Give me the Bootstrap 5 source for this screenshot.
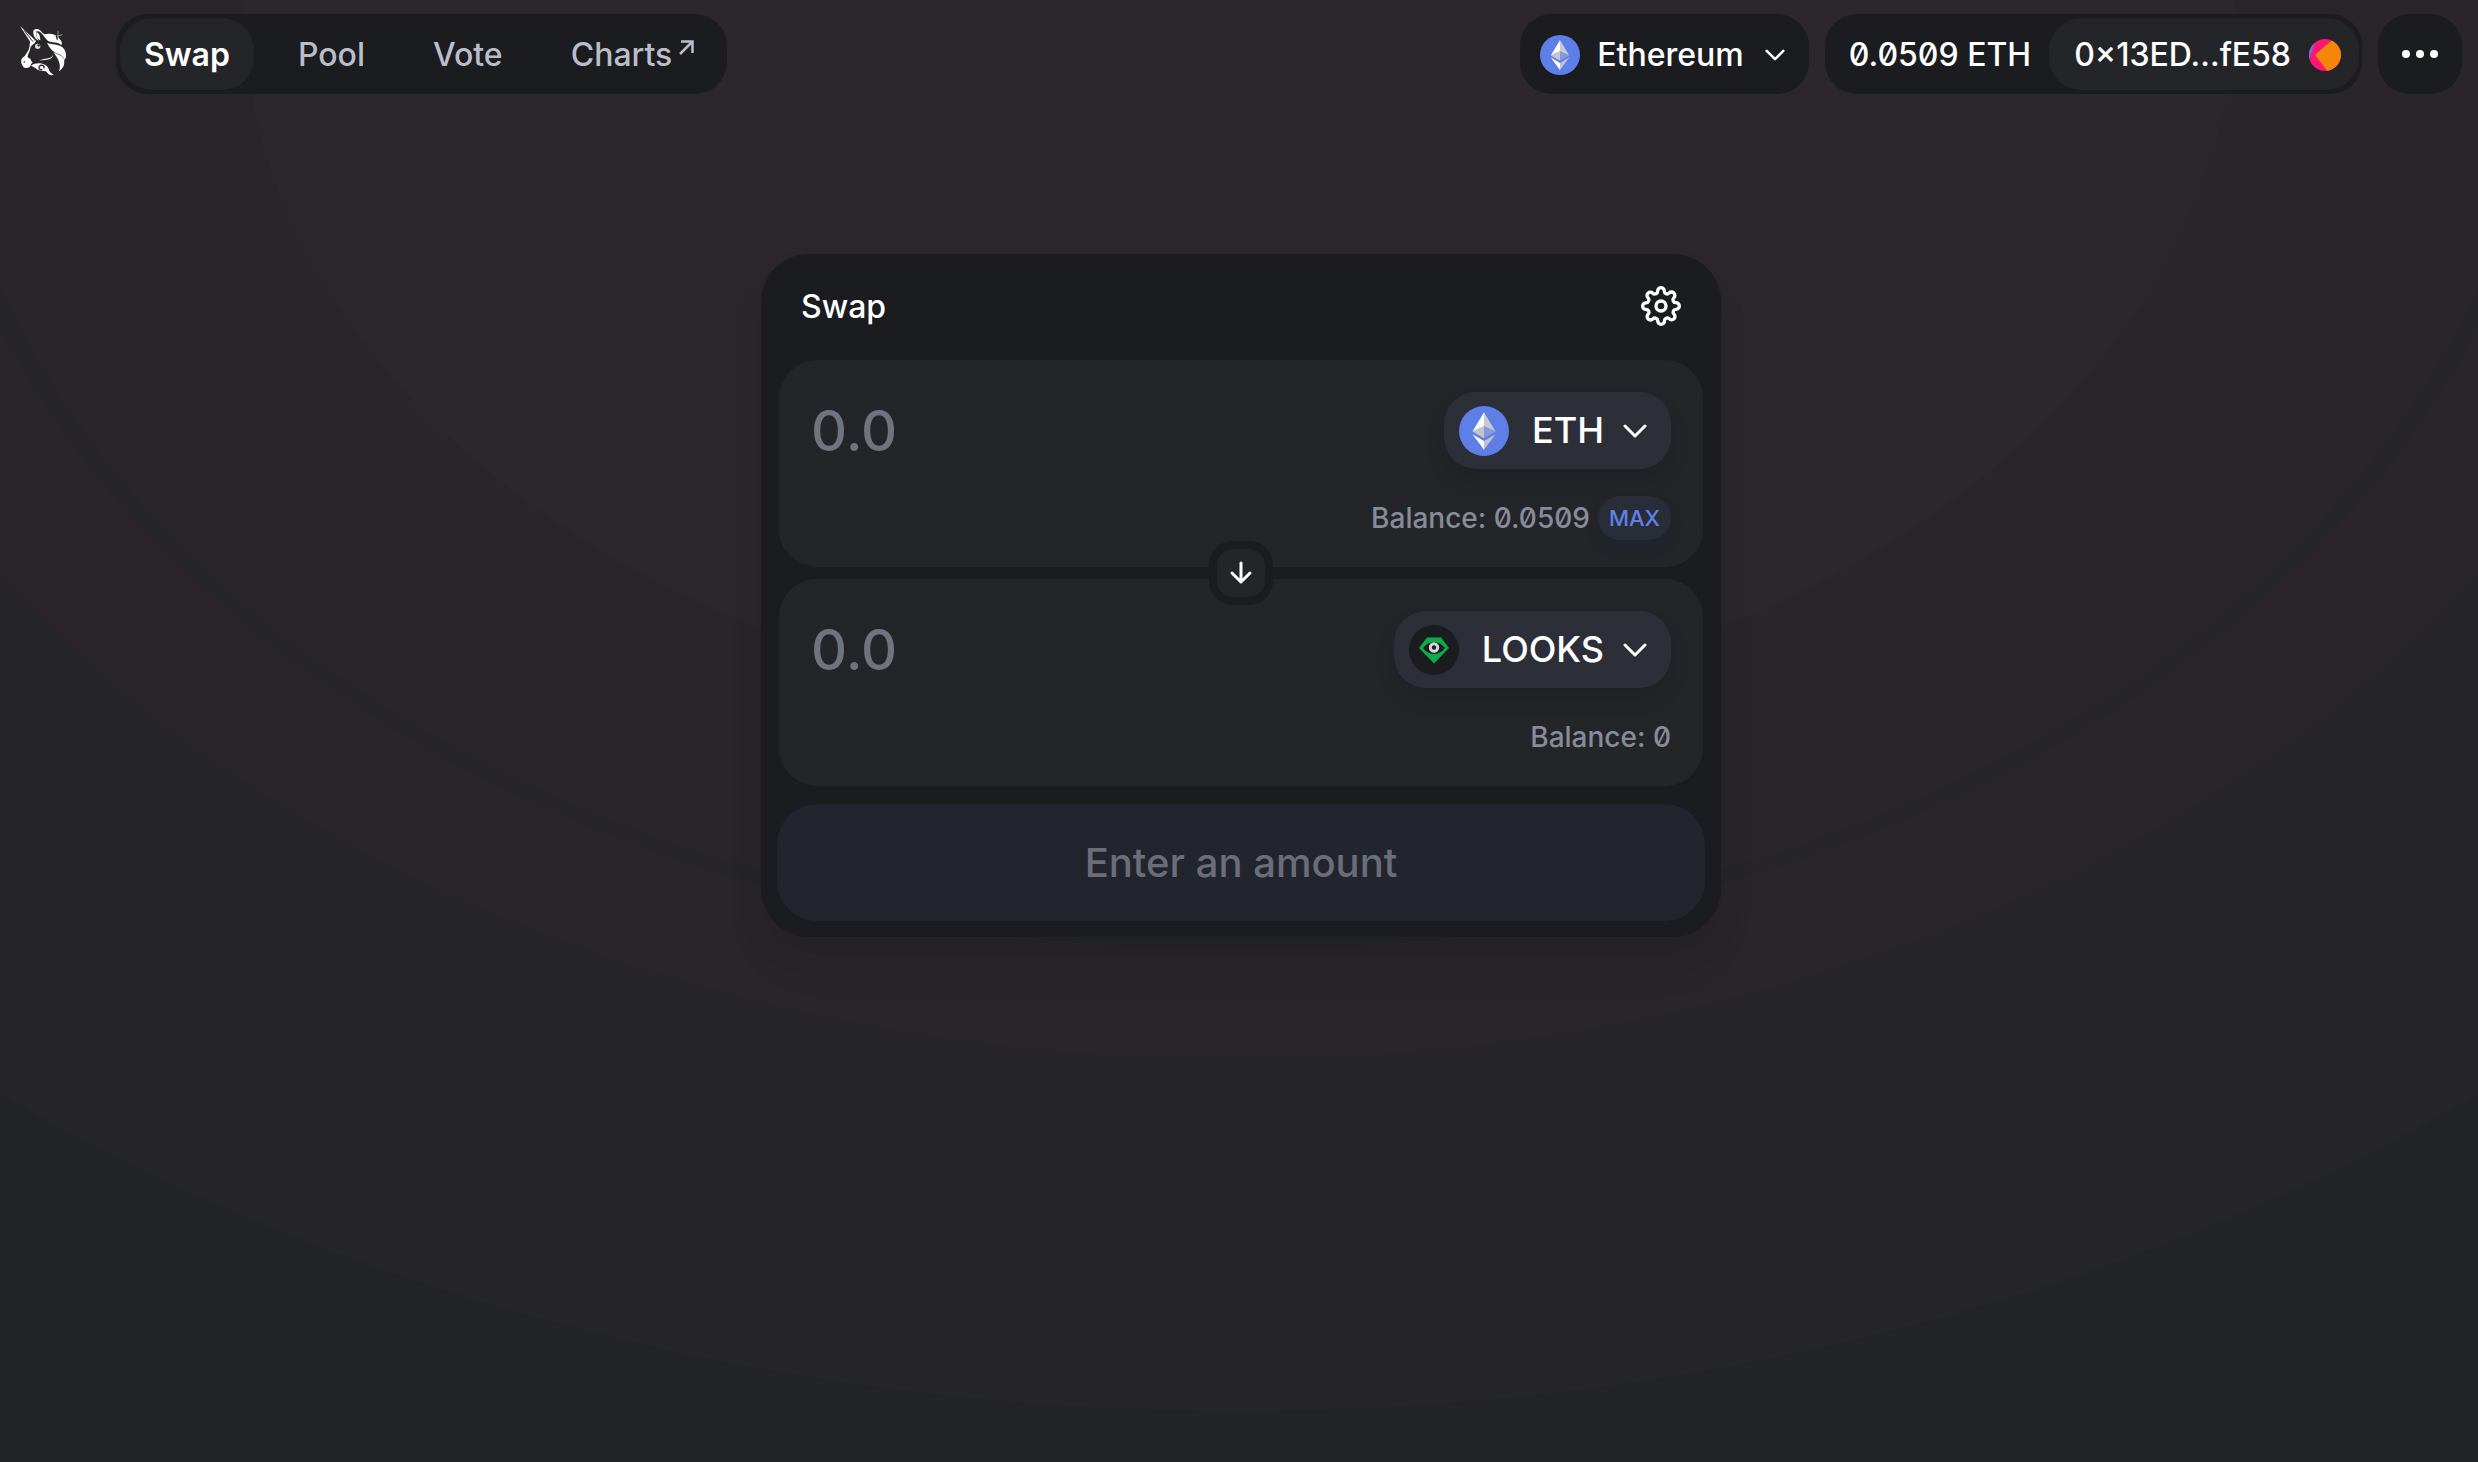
<!DOCTYPE html>
<html lang="en">
<head>
<meta charset="utf-8">
<meta name="viewport" content="width=device-width, initial-scale=1">
<title>Swap</title>
<link rel="stylesheet" href="https://cdn.jsdelivr.net/npm/bootstrap@5.3.0/dist/css/bootstrap.min.css">
<style>
:root { --ink: #1b1c1f; --panel: #232529; --raised: #2c2f38; --muted: #bbbeca; --blue: #5f81e9; }
body {
  font-family: Inter, "Liberation Sans", sans-serif; font-size: 32px; font-weight: 500; line-height: 40px;
  color: #fff; min-height: 100vh;
  background: radial-gradient(82vw 100vh at 50% 0, #2c262d 49%, #29252b 49% 64%, #26252a 64% 65%, #29252b 65% 72.400%, #25252a 72.400% 96.500%, #222428 96.500%) #222428;
}
a, button { color: inherit; text-decoration: none; }
button { border: 0; font: inherit; }
svg { display: block; flex: none; }
.topbar { padding: 14px 16px; }
.pill { height: 80px; border-radius: 32px; background: var(--ink); }
.brand { margin: 0 49px 0 3px; }
.tabs { padding: 4px; gap: 20px; }
.tab { height: 72px; padding: 2px 24px 0; border-radius: 32px; color: var(--muted); display: flex; align-items: center; }
.tab.current { background: var(--panel); color: #fff; font-weight: 600; }
.tab.outside { padding-right: 29px; gap: 7px; }
.net { padding: 2px 24px 0 20px; gap: 17px; }
.wallet { padding-right: 3px; }
.slashed { font-feature-settings: "zero"; }
.funds { padding: 2px 18px 0 24px; }
.account { height: 72px; border-radius: 32px; background: var(--panel); padding: 2px 18px 0 25px; gap: 18px; }
.dots { width: 84px; }
.swapcard { width: 960px; margin: 146px auto 0; padding: 16px; border-radius: 48px; background: var(--ink); box-shadow: 0 32px 48px rgba(0,0,0,.04), 0 16px 32px rgba(0,0,0,.06); }
.swaphead { height: 88px; padding: 16px 24px 0; }
.swaptitle { font-size: 32px; font-weight: 500; line-height: 40px; margin: 1px 0 0; }
.panel { height: 211px; border: 2px solid var(--ink); border-radius: 40px; background: var(--panel); padding: 32px; }
.amount { font-size: 56px; font-weight: 500; line-height: 64px; height: 77px; min-width: 0; border: 0; padding: 0; background: none; color: #fff; outline: 0; }
.amount::placeholder { color: #70747f; opacity: 1; }
.token { height: 77px; border-radius: 32px; padding: 0 24px 0 15px; background: var(--raised); font-size: 36px; box-shadow: 0 12px 20px rgba(0,0,0,.1); }
.tokname { margin: 0 19px 0 23px; padding-bottom: 2px; }
.bal { font-size: 28px; color: #888c99; height: 44px; margin-top: 27px; gap: 8px; }
.maxbtn { height: 44px; padding: 0 11px; border-radius: 24px; background: #292d37; color: var(--blue); font-size: 22px; line-height: 44px; box-shadow: 0 8px 10px rgba(32,36,48,.6); }
.flip { width: 64px; height: 64px; border: 8px solid var(--ink); border-radius: 24px; background: var(--panel); padding: 0; }
.go { height: 117px; border-radius: 40px; background: #23252e; font-size: 40px; }
.go:disabled { color: #6a6e78; }
</style>
</head>
<body>
<svg width="0" height="0" class="position-absolute" aria-hidden="true">
  <symbol id="eth" viewBox="0 0 40 40">
    <circle cx="20" cy="20" r="20" fill="#5f7fe8"/>
    <path d="M20 5v11.200l9.200 4.200z" fill="#c9cbd3"/><path d="M20 5l-9.200 15.400L20 16.200z" fill="#fff"/>
    <path d="M20 16.200v9.600l9.200-5.400z" fill="#8799d9"/><path d="M10.800 20.400l9.200 5.400v-9.600z" fill="#c4c6ce"/>
    <path d="M20 28v7l9.200-12.400z" fill="#c0c3cf"/><path d="M20 35v-7l-9.200-5.400z" fill="#fff"/>
  </symbol>
  <symbol id="chev" viewBox="0 0 24 14"><path d="M2 2l10 10L22 2" fill="none" stroke="#fff" stroke-width="3" stroke-linecap="round" stroke-linejoin="round"/></symbol>
</svg>

<header class="topbar d-flex align-items-center justify-content-between">
  <div class="d-flex align-items-center">
    <a href="#" class="brand" aria-label="Home">
      <svg width="48" height="58" viewBox="27 30 144 174">
        <g fill="#fff">
          <path d="M30 33L74 74l-4 10-9-3z"/>
          <path d="M61 79c-3 8-1 14-4 22-3 9-8 13-11 20-3 5-10 6-12 14-2 9 3 20 10 23 6 2 14 1 17-5 2-5 3-8 7-10-3-4-6-6-6-11-7-3-10-4-9-9 2-8 7-14 8-24 2-7 5-9 11-13 3-2 5-5 6-10z"/>
          <path d="M70 47c5-7 14-6 20-1 5 4 8 10 14 12 9-3 22-2 31 2 9 5 14 11 19 19 2 4 2 8 0 12-6-7-15-8-25-9-8-1-14-2-20-9-4-5-8-12-16-20-5-5-10-5-14-4-3 9 1 18 7 28l-8-5c-7-8-9-16-8-25z"/>
          <path d="M79 52c7 1 12 12 12 24-8-2-13-13-12-24z"/>
          <path d="M111 84c12 4 25 3 38 8 14 6 20 17 19 34l-4 9c-3-10-10-15-20-19-14-5-24-14-33-32z"/>
          <path d="M131 112c12 7 26 9 31 21 3 14-1 27-15 36 4-11 3-22-1-31-3-9-9-15-15-26z"/>
          <path d="M63 152c9-7 22-8 34-6 12 3 18 10 20 19 2 7 8 11 14 14l-6 2c-10-1-12-8-18-12-8-3-13 1-20-3-7-3-12-10-24-14z"/>
        </g>
        <path d="M42 46l27 34" fill="none" stroke="#2a262c" stroke-width="3"/>
        <path d="M130 107c4 17-8 22-24 24-7 1-12 3-18 6 10-2 20-1 29-4 11-4 15-13 13-26z" fill="#fff"/>
        <path d="M102 160c2-9-9-12-14-6-4 6 3 13 9 9" fill="none" stroke="#2a262c" stroke-width="4"/>
        <circle cx="83" cy="94" r="8" fill="#dcdce0"/><circle cx="86" cy="91" r="3.500" fill="#2a262c"/>
        <circle cx="43" cy="141" r="2.500" fill="#2a262c"/>
        <path d="M144 47v32M133 66l24-7" fill="none" stroke="#cfcfd4" stroke-width="2"/><path d="M139 62l3 12" fill="none" stroke="#2a262c" stroke-width="4"/>
      </svg>
    </a>
    <nav class="pill tabs d-flex">
      <a class="tab current" href="#" aria-current="page">Swap</a>
      <a class="tab" href="#">Pool</a>
      <a class="tab" href="#">Vote</a>
      <a class="tab outside" href="#">Charts<svg class="mb-3" width="15" height="15" viewBox="0 0 15 15" aria-hidden="true"><path d="M1 14L13 2M2 1.500h11.500V13" fill="none" stroke="#bbbeca" stroke-width="2.500"/></svg></a>
    </nav>
  </div>
  <div class="d-flex">
    <button class="pill net d-flex align-items-center me-3" type="button">
      <svg width="40" height="40"><use href="#eth"/></svg>Ethereum
      <svg class="ms-1" width="20" height="12"><use href="#chev"/></svg>
    </button>
    <div class="pill wallet d-flex align-items-center me-3">
      <span class="slashed funds">0.0509 ETH</span>
      <button class="account d-flex align-items-center" type="button">0×13ED...fE58
        <svg width="32" height="32" viewBox="0 0 32 32"><clipPath id="av"><circle cx="16" cy="16" r="16"/></clipPath><g clip-path="url(#av)"><path d="M0 0h32v32H0z" fill="#fc1871"/><path d="M0 0h7L1 18l-1 4z" fill="#5f78e8"/><path d="M6 16L22 2l12-4v36H20z" fill="#f68608"/></g></svg>
      </button>
    </div>
    <button class="pill dots d-flex align-items-center justify-content-center p-0" type="button" aria-label="Menu">
      <svg width="38" height="10" viewBox="0 0 38 10"><g fill="#fff"><circle cx="5" cy="5" r="4"/><circle cx="19" cy="5" r="4"/><circle cx="33" cy="5" r="4"/></g></svg>
    </button>
  </div>
</header>

<div class="ps-1">
<main class="swapcard">
  <div class="swaphead d-flex justify-content-between align-items-start">
    <h1 class="swaptitle">Swap</h1>
    <button type="button" class="bg-transparent p-0" aria-label="Settings">
      <svg width="40" height="40" viewBox="0 0 24 24" fill="none" stroke="#fff" stroke-width="2" stroke-linecap="round" stroke-linejoin="round"><circle cx="12" cy="12" r="3"/><path d="M19.400 15a1.650 1.650 0 0 0 .33 1.820l.06.06a2 2 0 0 1 0 2.830 2 2 0 0 1-2.830 0l-.06-.06a1.650 1.650 0 0 0-1.820-.33 1.650 1.650 0 0 0-1 1.510V21a2 2 0 0 1-2 2 2 2 0 0 1-2-2v-.09A1.650 1.650 0 0 0 9 19.400a1.650 1.650 0 0 0-1.820.33l-.06.06a2 2 0 0 1-2.830 0 2 2 0 0 1 0-2.830l.06-.06a1.650 1.650 0 0 0 .33-1.820 1.650 1.650 0 0 0-1.510-1H3a2 2 0 0 1-2-2 2 2 0 0 1 2-2h.09A1.650 1.650 0 0 0 4.600 9a1.650 1.650 0 0 0-.33-1.820l-.06-.06a2 2 0 0 1 0-2.830 2 2 0 0 1 2.830 0l.06.06a1.650 1.650 0 0 0 1.820.33H9a1.650 1.650 0 0 0 1-1.510V3a2 2 0 0 1 2-2 2 2 0 0 1 2 2v.09a1.650 1.650 0 0 0 1 1.510 1.650 1.650 0 0 0 1.820-.33l.06-.06a2 2 0 0 1 2.830 0 2 2 0 0 1 0 2.830l-.06.06a1.650 1.650 0 0 0-.33 1.820V9a1.650 1.650 0 0 0 1.510 1H21a2 2 0 0 1 2 2 2 2 0 0 1-2 2h-.09a1.650 1.650 0 0 0-1.510 1z"/></svg>
    </button>
  </div>

  <div class="position-relative d-flex flex-column gap-2">
    <section class="panel">
      <div class="d-flex">
        <input class="amount flex-grow-1" type="text" inputmode="decimal" placeholder="0.0" aria-label="Amount to pay">
        <button class="token d-flex align-items-center" type="button">
          <svg width="50" height="50"><use href="#eth"/></svg>
          <span class="tokname">ETH</span>
          <svg width="24" height="14"><use href="#chev"/></svg>
        </button>
      </div>
      <div class="bal d-flex align-items-center justify-content-end">
        <span class="slashed">Balance: 0.0509</span>
        <button class="maxbtn" type="button">MAX</button>
      </div>
    </section>
    <section class="panel">
      <div class="d-flex">
        <input class="amount flex-grow-1" type="text" inputmode="decimal" placeholder="0.0" aria-label="Amount to receive">
        <button class="token d-flex align-items-center" type="button">
          <svg width="50" height="50" viewBox="0 0 50 50">
            <circle cx="25" cy="25" r="25" fill="#1b1c1f"/>
            <path d="M18 12.500h14L40 23 25 38.500 10 23z" fill="#0dac4b"/>
            <path d="M14 23c6-8 16-8 22 0-6 8-16 8-22 0z" fill="#1b1c1f"/>
            <circle cx="25" cy="22.500" r="3.700" fill="#1b1c1f" stroke="#d4d4da" stroke-width="3"/>
          </svg>
          <span class="tokname">LOOKS</span>
          <svg width="24" height="14"><use href="#chev"/></svg>
        </button>
      </div>
      <div class="bal d-flex align-items-center justify-content-end">
        <span class="slashed">Balance: 0</span>
      </div>
    </section>
    <button class="flip position-absolute top-50 start-50 translate-middle d-flex align-items-center justify-content-center" type="button" aria-label="Switch tokens">
      <svg width="24" height="24" viewBox="0 0 24 24"><path d="M12 2v19M3 12l9 9 9-9" fill="none" stroke="#fff" stroke-width="3" stroke-linecap="round" stroke-linejoin="round"/></svg>
    </button>
  </div>
  <button class="go w-100 mt-3" type="button" disabled>Enter an amount</button>
</main>
</div>
<script src="https://cdn.jsdelivr.net/npm/bootstrap@5.3.0/dist/js/bootstrap.bundle.min.js"></script>
</body>
</html>
